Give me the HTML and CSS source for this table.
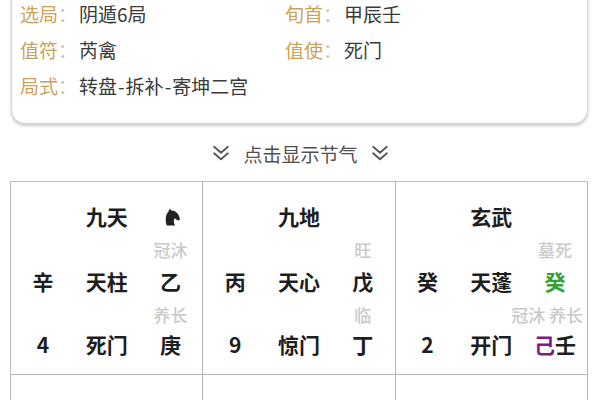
FILE: index.html
```html
<!DOCTYPE html>
<html lang="zh-CN">
<head>
<meta charset="utf-8">
<title>奇门遁甲</title>
<link rel="stylesheet" href="styles.css">
</head>
<body>
<div class="card">
  <div class="info">
    <div class="item"><span class="label">选局<i>：</i></span><span class="value">阴遁6局</span></div>
    <div class="item"><span class="label">旬首<i>：</i></span><span class="value">甲辰壬</span></div>
    <div class="item"><span class="label">值符<i>：</i></span><span class="value">芮禽</span></div>
    <div class="item"><span class="label">值使<i>：</i></span><span class="value">死门</span></div>
    <div class="item full"><span class="label">局式<i>：</i></span><span class="value">转盘<b class="dash">-</b>拆补<b class="dash">-</b>寄坤二宫</span></div>
  </div>
</div>

<div class="toggle">
  <svg class="chev" viewBox="0 0 16 16"><path d="M2.5 3 L8 7.8 L13.5 3 M2.5 8.2 L8 13 L13.5 8.2" fill="none" stroke="#555" stroke-width="1.4" stroke-linecap="round" stroke-linejoin="round"/></svg>
  <span>点击显示节气</span>
  <svg class="chev" viewBox="0 0 16 16"><path d="M2.5 3 L8 7.8 L13.5 3 M2.5 8.2 L8 13 L13.5 8.2" fill="none" stroke="#555" stroke-width="1.4" stroke-linecap="round" stroke-linejoin="round"/></svg>
</div>

<div class="board">
  <div class="cell">
    <div class="god">九天</div>
    <div class="mark"><svg class="horse" viewBox="0 0 16 16"><path d="M4 15.5 C2.6 11.5 2.8 6.5 5.6 3.6 L6.4 1.2 L7.8 3 C11 2.8 14.2 5.6 15 9.6 C15.2 10.8 14.2 11.6 13 11.2 L10.6 9.4 C9.6 11.2 9.8 13.4 11 15.5 Z" fill="#222"/></svg></div>
    <div class="tiny c3">冠沐</div>
    <div class="main">辛</div><div class="main">天柱</div><div class="main">乙</div>
    <div class="tiny c3">养长</div>
    <div class="main">4</div><div class="main">死门</div><div class="main">庚</div>
  </div>
  <div class="cell">
    <div class="god">九地</div><div class="mark"></div>
    <div class="tiny c3">旺</div>
    <div class="main">丙</div><div class="main">天心</div><div class="main">戊</div>
    <div class="tiny c3">临</div>
    <div class="main">9</div><div class="main">惊门</div><div class="main">丁</div>
  </div>
  <div class="cell">
    <div class="god">玄武</div><div class="mark"></div>
    <div class="tiny c3">墓死</div>
    <div class="main">癸</div><div class="main">天蓬</div><div class="main green">癸</div>
    <div class="tiny wide">冠沐 养长</div>
    <div class="main">2</div><div class="main">开门</div><div class="main"><span class="purple">己</span>壬</div>
  </div>
  <div class="cell">
    <div class="god">值符</div><div class="mark"><span class="small-mark">丁</span></div>
    <div class="tiny c3">临</div>
    <div class="main">丁</div><div class="main">天芮</div><div class="main">己</div>
    <div class="tiny c3">病</div>
    <div class="main">3</div><div class="main">伤门</div><div class="main">辛</div>
  </div>
  <div class="cell"></div>
  <div class="cell">
    <div class="god">白虎</div><div class="mark"></div>
    <div class="tiny c3">墓</div>
    <div class="main">庚</div><div class="main">天任</div><div class="main">丙</div>
    <div class="tiny c3">胎</div>
    <div class="main">7</div><div class="main">景门</div><div class="main">戊</div>
  </div>
</div>
</body>
</html>
```

FILE: styles.css
```css
html, body {
  margin: 0;
  padding: 0;
  background: #ffffff;
  overflow: hidden;
}
body {
  font-family: "Noto Sans CJK SC", "Noto Sans", sans-serif;
  color: #333;
}

.card {
  margin: -20px 12px 0 11px;
  border: 1px solid #d6d6d6;
  border-radius: 0 0 14px 14px;
  box-shadow: 0 2px 3px rgba(0, 0, 0, 0.2);
  padding: 15px 8px 19px 8px;
  background: #fff;
}
.info {
  display: grid;
  grid-template-columns: 265px 1fr;
}
.item {
  display: flex;
  height: 36px;
  line-height: 36px;
  font-size: 19px;
  white-space: nowrap;
}
.item.full { grid-column: 1 / 3; }
.label {
  width: 59px;
  color: #c9a35a;
}
.label i {
  font-style: normal;
  color: #c8c0b0;
}
.value { color: #3a3a3a; }
.dash {
  font-weight: 400;
  padding: 0 1px;
}

.toggle {
  margin: 14px 0 13px;
  height: 30px;
  display: flex;
  justify-content: center;
  align-items: center;
  gap: 12px;
  font-size: 19px;
  color: #505050;
  padding-left: 1px;
}
.chev {
  width: 20px;
  height: 20px;
}

.board {
  margin: 0 12px 0 10px;
  display: grid;
  grid-template-columns: repeat(3, 1fr);
  border-top: 1px solid #bdbdbd;
  border-left: 1px solid #bdbdbd;
}
.cell {
  height: 193px;
  border-right: 1px solid #b5b5b5;
  border-bottom: 1px solid #b5b5b5;
  box-sizing: border-box;
  display: grid;
  grid-template-columns: 1fr 1fr 1fr;
  grid-template-rows: 30px 30px 37px 28px 35px;
  padding-top: 19px;
  align-content: start;
  align-items: end;
}
.god {
  grid-column: 2;
  text-align: center;
  font-size: 21px;
  font-weight: 700;
  line-height: 30px;
  color: #1e1e1e;
}
.mark {
  grid-column: 3;
  height: 30px;
  display: flex;
  justify-content: center;
  align-items: center;
  padding-left: 2px;
}
.horse {
  width: 19px;
  height: 19px;
}
.small-mark {
  font-size: 17px;
  font-weight: 700;
  color: #1e1e1e;
}
.tiny {
  font-size: 17px;
  line-height: 22px;
  color: #c9c9c9;
  font-weight: 500;
}
.tiny.c3 {
  grid-column: 3;
  text-align: center;
}
.tiny.wide {
  grid-column: 2 / 4;
  text-align: right;
  padding-right: 4px;
}
.main {
  text-align: center;
  font-size: 21px;
  font-weight: 700;
  line-height: 34px;
  color: #1e1e1e;
}
.green { color: #35a035; }
.purple { color: #7d1e7d; }
```
